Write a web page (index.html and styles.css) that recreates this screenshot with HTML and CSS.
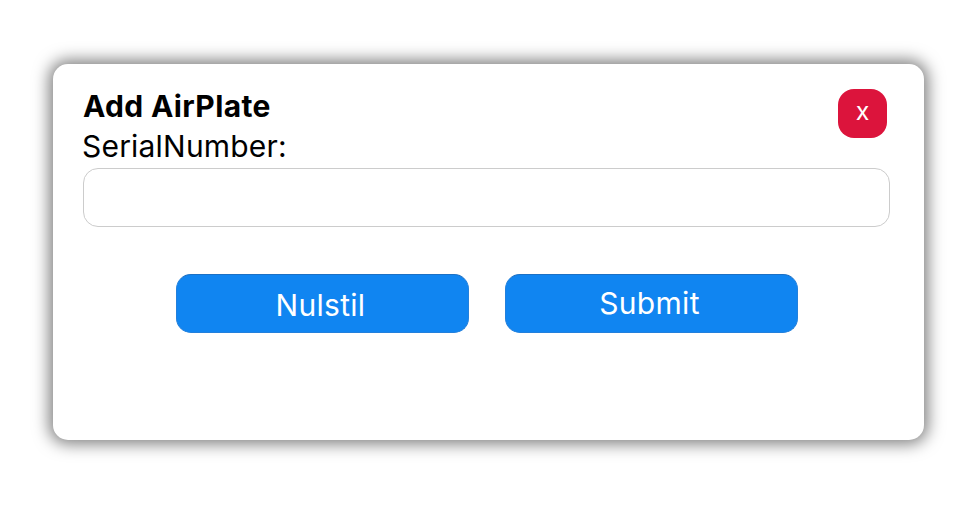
FILE: index.html
```html
<!DOCTYPE html>
<html lang="da">
<head>
<meta charset="utf-8">
<title>Add AirPlate</title>
<link rel="stylesheet" href="styles.css">
</head>
<body>
<form class="dialog">
  <header class="header">
    <h1 class="title">Add AirPlate</h1>
    <button class="close" type="button">x</button>
  </header>
  <label class="label" for="serial">SerialNumber:</label>
  <input class="input" id="serial" type="text">
  <div class="actions">
    <button class="button reset" type="reset">Nulstil</button>
    <button class="button submit" type="submit">Submit</button>
  </div>
</form>
</body>
</html>
```
FILE: styles.css
```css
* { box-sizing: border-box; }
body {
  min-height: 506px;
  margin: 0;
  padding: 64px 42px 0 53px;
  background: #fff;
  color: #000;
  font-family: Inter, sans-serif;
}
.dialog {
  height: 376px;
  padding: 25px 34px 0 30px;
  border-radius: 15px;
  background: #fff;
  box-shadow: 0 0 16px 4px rgba(0, 0, 0, 0.5);
}
.header {
  display: flex;
  justify-content: space-between;
  height: 39px;
  padding-right: 3px;
}
.title {
  margin: 0;
  font-size: 30px;
  line-height: 34px;
  font-weight: 700;
  letter-spacing: 0.35px;
}
.close {
  width: 49px;
  height: 49px;
  padding: 0 0 6px;
  border: 0;
  border-radius: 16px;
  background: #dc143c;
  color: #fff;
  font: 25px/42px Inter, sans-serif;
}
.label {
  display: block;
  height: 40px;
  margin-left: -1px;
  font-size: 30px;
  line-height: 36px;
  letter-spacing: 0.2px;
}
.input {
  display: block;
  width: 100%;
  height: 59px;
  border: 1px solid #ccc;
  border-radius: 15px;
  background: #fff;
}
.actions { display: flex; gap: 36px; margin: 47px 0 0 92.5px; }
.button {
  width: 293px;
  height: 59px;
  padding: 0;
  border: 1px solid #2380dc;
  border-top-color: #1c70c4;
  border-radius: 15px;
  background: #1085f1;
  color: #fff;
  font: 30px/55px Inter, sans-serif;
  letter-spacing: 0.3px;
}
.reset { padding: 3px 3px 0 0; }
.submit { padding-right: 3px; }
```
